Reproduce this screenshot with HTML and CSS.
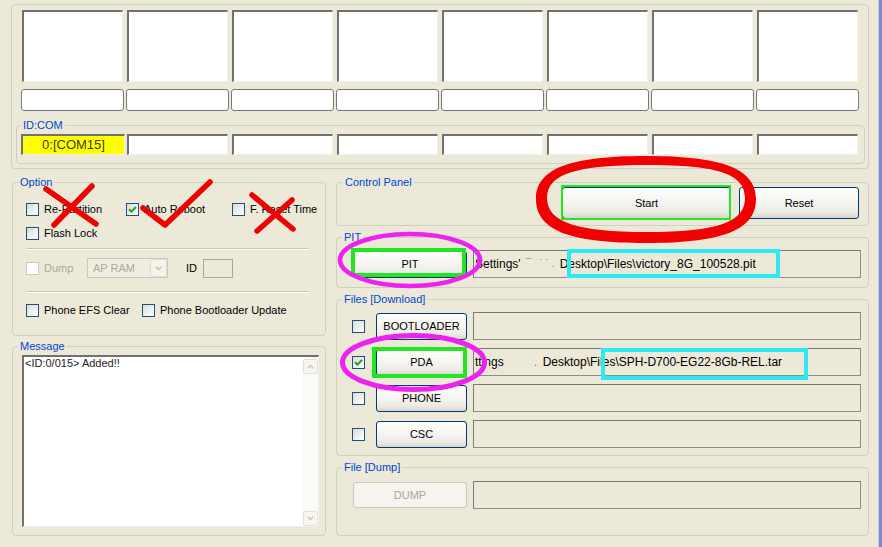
FILE: index.html
```html
<!DOCTYPE html>
<html>
<head>
<meta charset="utf-8">
<title>Odin</title>
<link rel="stylesheet" href="styles.css">
</head>
<body>
<div class="window">
  <div class="client">
    <section class="group top">
      <div class="bigrow">
        <div class="cell sunken big"></div><div class="cell sunken big"></div><div class="cell sunken big"></div><div class="cell sunken big"></div>
        <div class="cell sunken big"></div><div class="cell sunken big"></div><div class="cell sunken big"></div><div class="cell sunken big"></div>
      </div>
      <div class="smallrow">
        <div class="cell small"></div><div class="cell small"></div><div class="cell small"></div><div class="cell small"></div>
        <div class="cell small"></div><div class="cell small"></div><div class="cell small"></div><div class="cell small"></div>
      </div>
      <div class="group idgroup">
        <span class="legend">ID:COM</span>
        <div class="idrow">
          <div class="cell sunken id port">0:[COM15]</div>
          <div class="cell sunken id"></div><div class="cell sunken id"></div><div class="cell sunken id"></div>
          <div class="cell sunken id"></div><div class="cell sunken id"></div><div class="cell sunken id"></div><div class="cell sunken id"></div>
        </div>
      </div>
    </section>

    <div class="columns">
      <div class="col-left">
        <div class="group option">
          <span class="legend">Option</span>
          <div class="opt-row r1">
            <label class="cbi w100"><span class="cb"></span>Re-Partition</label>
            <label class="cbi w106"><span class="cb"><svg viewBox="0 0 11 11"><path d="M2 5.3 L4.4 7.7 L9 3" fill="none" stroke="#21a121" stroke-width="2"/></svg></span>Auto Reboot</label>
            <label class="cbi"><span class="cb"></span>F. Reset Time</label>
          </div>
          <div class="opt-row r2">
            <label class="cbi"><span class="cb"></span>Flash Lock</label>
          </div>
          <div class="sep s1"></div>
          <div class="opt-row r3">
            <label class="cbi dis w61"><span class="cb"></span>Dump</label>
            <div class="combo">
              <span class="combo-text">AP RAM</span>
              <span class="combo-btn"><svg width="7" height="5" viewBox="0 0 7 5"><path d="M0.7 0.7 L3.5 3.6 L6.3 0.7" fill="none" stroke="#c5c3b8" stroke-width="1.4"/></svg></span>
            </div>
            <span class="id-label">ID</span>
            <div class="id-box"></div>
          </div>
          <div class="sep s2"></div>
          <div class="opt-row r4">
            <label class="cbi w116"><span class="cb"></span>Phone EFS Clear</label>
            <label class="cbi"><span class="cb"></span>Phone Bootloader Update</label>
          </div>
        </div>

        <div class="group message">
          <span class="legend">Message</span>
          <div class="msgbox sunken">
            <div class="msgtext">&lt;ID:0/015&gt; Added!!</div>
            <div class="vscroll">
              <span class="sbtn"><svg width="7" height="5" viewBox="0 0 7 5"><path d="M0.7 4.3 L3.5 1.4 L6.3 4.3" fill="none" stroke="#c8c6bc" stroke-width="1.4"/></svg></span>
              <span class="sbtn"><svg width="7" height="5" viewBox="0 0 7 5"><path d="M0.7 0.7 L3.5 3.6 L6.3 0.7" fill="none" stroke="#c8c6bc" stroke-width="1.4"/></svg></span>
            </div>
          </div>
        </div>
      </div>

      <div class="col-right">
        <div class="group cp">
          <span class="legend">Control Panel</span>
          <div class="cp-btns">
            <button class="btn start">Start</button>
            <button class="btn reset">Reset</button>
          </div>
        </div>

        <div class="group pit">
          <span class="legend">PIT</span>
          <div class="frow">
            <button class="btn wide">PIT</button>
            <div class="field">Settings'<span class="smudge sm1">&#175;&nbsp;&nbsp;&nbsp;&#729; &#729; .</span>Desktop\Files\victory_8G_100528.pit</div>
          </div>
        </div>

        <div class="group files">
          <span class="legend">Files [Download]</span>
          <div class="frows">
            <div class="frow"><span class="cb"></span><button class="btn file">BOOTLOADER</button><div class="field"></div></div>
            <div class="frow"><span class="cb"><svg viewBox="0 0 11 11"><path d="M2 5.3 L4.4 7.7 L9 3" fill="none" stroke="#21a121" stroke-width="2"/></svg></span><button class="btn file">PDA</button><div class="field">ttings<span class="smudge sm2">.</span>Desktop\Files\SPH-D700-EG22-8Gb-REL.tar</div></div>
            <div class="frow"><span class="cb"></span><button class="btn file">PHONE</button><div class="field"></div></div>
            <div class="frow"><span class="cb"></span><button class="btn file">CSC</button><div class="field"></div></div>
          </div>
        </div>

        <div class="group dump">
          <span class="legend">File [Dump]</span>
          <div class="frow">
            <button class="btn wide btn-dis">DUMP</button>
            <div class="field"></div>
          </div>
        </div>
      </div>
    </div>
  </div>
  <div class="frame"></div>

  <svg class="annot" width="882" height="547" viewBox="0 0 882 547">
    <g fill="none" stroke="#22e622">
      <rect x="562" y="186" width="168" height="33" stroke-width="2"/>
      <rect x="353" y="250" width="111" height="25" stroke-width="4"/>
      <rect x="374" y="349" width="91" height="27" stroke-width="4"/>
    </g>
    <g fill="none" stroke="#2ee8f4" stroke-width="4">
      <rect x="569" y="251" width="209" height="25"/>
      <rect x="603" y="350" width="203" height="28"/>
    </g>
    <g fill="none" stroke="#ee22ee">
      <ellipse cx="410" cy="260" rx="70" ry="26" stroke-width="4.5"/>
      <ellipse cx="413.5" cy="362.5" rx="71" ry="27" stroke-width="5"/>
    </g>
    <path fill="#f00000" fill-rule="evenodd" d="M536,199 C536,169 569,156 646,156 C723,156 756,169 756,199 C756,230 723,243 646,243 C569,243 536,230 536,199 Z M547,198 C547,174 576,165 647,165 C718,165 745,174 745,198 C745,222 718,232 647,232 C576,232 547,222 547,198 Z"/>
    <g fill="none" stroke="#f00000" stroke-width="5.5" stroke-linecap="round" stroke-linejoin="round">
      <line x1="46" y1="189" x2="96" y2="224"/>
      <line x1="92" y1="186" x2="54" y2="225"/>
      <polyline points="143,208 165,225 210,182"/>
      <line x1="252" y1="195" x2="293" y2="229"/>
      <line x1="292" y1="200" x2="257" y2="231"/>
    </g>
  </svg>
</div>
</body>
</html>
```

FILE: styles.css
```css
* { box-sizing: border-box; }

html, body {
  margin: 0;
  padding: 0;
  background: #ece9d8;
}

body {
  font-family: "Liberation Sans", Arial, sans-serif;
  font-size: 11px;
  font-weight: 400;
  color: #000;
}

.window {
  position: relative;
  width: 882px;
  height: 547px;
  display: flex;
  overflow: hidden;
  background: #ece9d8;
}

.client {
  width: 878px;
  flex: none;
}

.frame {
  flex: 1;
  background: #7e89c9;
  border-left: 1px solid #c5c8e2;
}

.group {
  border: 1px solid #d0d0bf;
  border-radius: 4px;
}

.legend {
  display: block;
  width: max-content;
  height: 13px;
  margin: -7px 0 0 5px;
  padding: 0 2px;
  line-height: 13px;
  background: #ece9d8;
  color: #0046d5;
  white-space: nowrap;
}

/* top area */
.top {
  width: 858px;
  height: 165px;
  margin: 4px 0 0 11px;
  padding: 5px 0 0 4px;
}

.bigrow {
  display: flex;
  gap: 4px;
  margin-left: 6px;
}

.cell {
  background: #fff;
  flex: none;
}

.sunken {
  border-style: solid;
  border-width: 2px 1px 1px 2px;
  border-color: #717171 #f2f2ec #f2f2ec #717171;
}

.big {
  width: 101px;
  height: 72px;
}

.smallrow {
  display: flex;
  gap: 2px;
  margin: 7px 0 0 5px;
}

.small {
  width: 103px;
  height: 22px;
  border: 1px solid #787878;
  border-radius: 3px;
}

.idgroup {
  width: 849px;
  height: 39px;
  margin-top: 14px;
}

.idgroup .legend { margin-left: 4px; }

.idrow {
  display: flex;
  gap: 4px;
  margin: 2px 0 0 5px;
}

.id {
  width: 101px;
  height: 21px;
}

.port {
  width: 104px;
  margin: 0 -2px 0 -1px;
  background: #ffff00;
  color: #3c3c1c;
  font-size: 13px;
  line-height: 18px;
  text-align: center;
}

/* columns */
.columns {
  display: flex;
  margin-top: 13px;
}

.col-left {
  width: 314px;
  margin-left: 12px;
  flex: none;
}

.col-right {
  width: 533px;
  margin-left: 10px;
  flex: none;
}

/* option */
.option {
  height: 154px;
  padding-left: 13px;
}

.option .legend { margin-left: -8px; }

.opt-row {
  display: flex;
  align-items: center;
  height: 16px;
}

.r1 { margin-top: 12px; }
.r2 { margin-top: 8px; }
.r3 { height: 20px; margin-top: 8px; }
.r4 { margin-top: 9px; }

.sep {
  width: 283px;
  height: 2px;
  border-top: 1px solid #c9c6b6;
  border-bottom: 1px solid #fff;
}

.s1 { margin-top: 7px; }
.s2 { margin-top: 13px; }

.cbi {
  display: flex;
  align-items: center;
  gap: 5px;
  flex: none;
  white-space: nowrap;
}

.w100 { width: 100px; }
.w106 { width: 106px; }
.w61 { width: 61px; }
.w116 { width: 116px; }

.cb {
  width: 13px;
  height: 13px;
  flex: none;
  display: flex;
  align-items: center;
  justify-content: center;
  border: 1px solid #1c5180;
  background: linear-gradient(135deg, #dcdcd5 0%, #ffffff 100%);
}

.cb svg {
  width: 11px;
  height: 11px;
  display: block;
}

.dis { color: #aca899; }

.dis .cb {
  border-color: #cac8bb;
  background: #fff;
}

.combo {
  width: 81px;
  height: 20px;
  display: flex;
  align-items: center;
  flex: none;
  border: 1px solid #cbc9bc;
  background: #efede2;
  color: #aca899;
  padding-left: 5px;
}

.combo-btn {
  width: 17px;
  height: 18px;
  margin-left: auto;
  display: flex;
  align-items: center;
  justify-content: center;
  border: 1px solid #e0ded3;
  border-radius: 2px;
  background: #f3f2eb;
}

.id-label {
  margin-left: 18px;
}

.id-box {
  width: 30px;
  height: 19px;
  margin-left: 6px;
  border: 1px solid #a8a7a0;
  background: #ece9d8;
}

/* message */
.message {
  height: 190px;
  margin-top: 10px;
}

.msgbox {
  width: 297px;
  height: 172px;
  margin: 2px 0 0 9px;
  display: flex;
  background: #fff;
}

.msgtext {
  flex: 1;
  padding-left: 1px;
  line-height: 13px;
  color: #222;
  white-space: nowrap;
}

.vscroll {
  width: 16px;
  display: flex;
  flex-direction: column;
  justify-content: space-between;
  align-items: flex-end;
  padding: 2px 0 0 0;
  background: #fbfbf8;
}

.sbtn {
  width: 15px;
  height: 15px;
  display: flex;
  align-items: center;
  justify-content: center;
  border: 1px solid #e4e3db;
  border-radius: 2px;
  background: #f6f5f0;
}

/* right side */
.cp {
  height: 44px;
  display: flex;
  justify-content: space-between;
  align-items: flex-start;
}

.cp .legend { margin-left: 6px; }

.cp-btns {
  display: flex;
  gap: 8px;
  margin: 4px 9px 0 0;
}

.btn {
  font-family: inherit;
  font-size: 11px;
  font-weight: 400;
  color: #000;
  padding: 0;
  flex: none;
  display: flex;
  align-items: center;
  justify-content: center;
  border: 1px solid #003c74;
  border-radius: 3px;
  background: linear-gradient(#ffffff 0%, #f6f5f1 45%, #ecebe5 80%, #d9d6cb 100%);
}

.start { width: 169px; height: 32px; }
.reset { width: 120px; height: 32px; }

.pit {
  height: 51px;
  margin-top: 11px;
  padding-left: 16px;
}

.pit .legend { margin-left: -11px; }

.frow {
  display: flex;
  align-items: center;
  height: 28px;
}

.pit .frow { margin-top: 6px; }

.wide { width: 114px; height: 27px; }

.file { width: 91px; height: 27px; margin-left: 11px; }

.btn-dis {
  height: 26px;
  border-color: #cbc9bd;
  background: #f5f4ee;
  color: #aca899;
}

.field {
  width: 388px;
  height: 28px;
  margin-left: 6px;
  flex: none;
  border: 1px solid #8e8e8e;
  border-top-color: #777;
  border-left-color: #7b7b7b;
  background: #ece9d8;
  font-size: 12px;
  line-height: 26px;
  padding-left: 1px;
  white-space: nowrap;
  overflow: hidden;
}

.smudge {
  display: inline-block;
  color: #777;
  vertical-align: top;
}

.sm1 { width: 39px; padding-left: 5px; font-size: 10px; }
.sm2 { width: 39px; padding-left: 30px; }

.files {
  height: 157px;
  margin-top: 11px;
  padding-left: 15px;
}

.files .legend { margin-left: -10px; }

.frows {
  display: flex;
  flex-direction: column;
  gap: 8px;
  margin-top: 6px;
}

.dump {
  height: 69px;
  margin-top: 11px;
  padding-left: 16px;
}

.dump .legend { margin-left: -11px; }

.dump .frow { margin-top: 7px; }

/* annotation overlay */
.annot {
  position: absolute;
  left: 0;
  top: 0;
  pointer-events: none;
}
```
